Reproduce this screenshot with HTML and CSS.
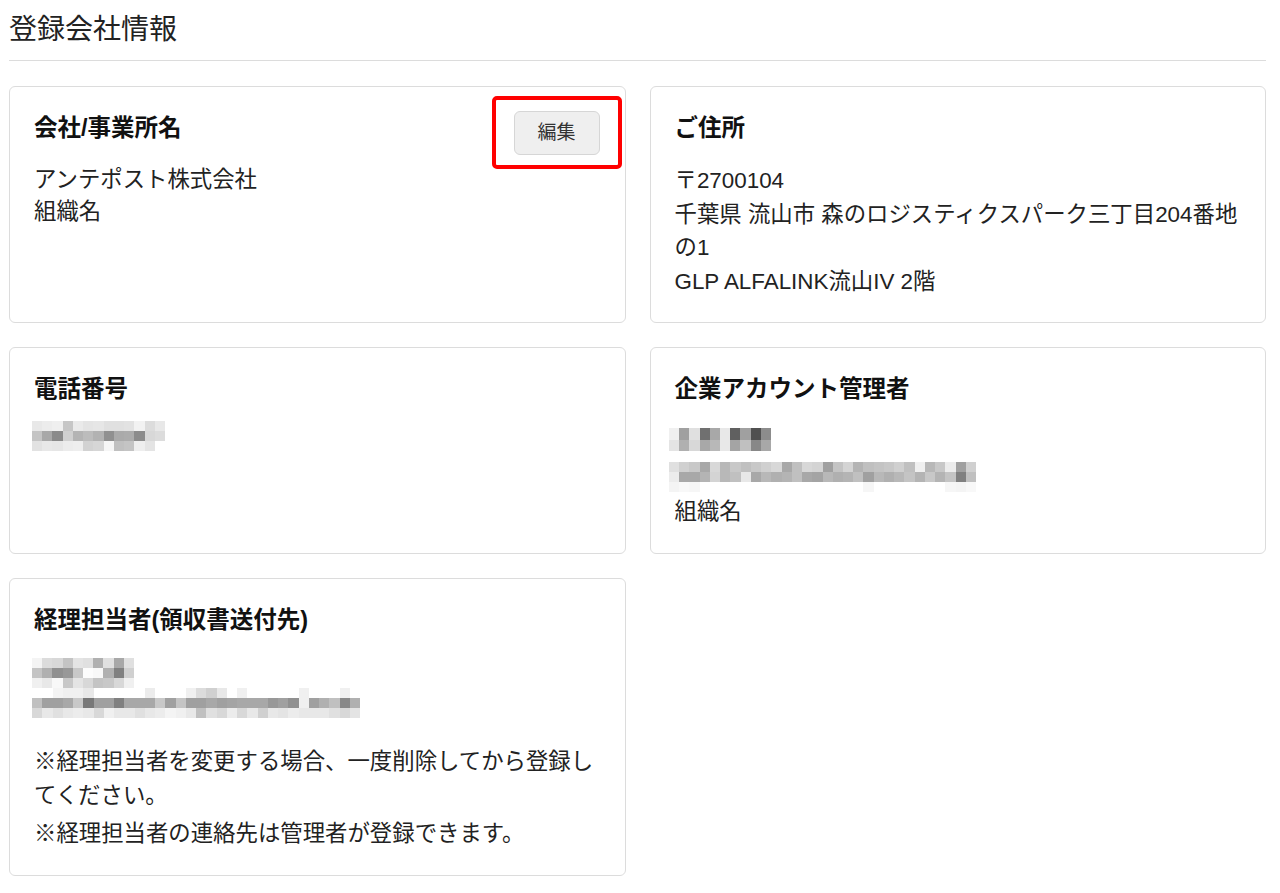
FILE: index.html
```html
<!DOCTYPE html>
<html lang="ja">
<head>
<meta charset="utf-8">
<title>登録会社情報</title>
<link rel="stylesheet" href="styles.css">
</head>
<body>
<div class="page">
  <h1 class="title">登録会社情報</h1>
  <hr class="divider">
  <div class="cards">
    <section class="card">
      <div class="card-head">
        <h2 class="card-title">会社/事業所名</h2>
        <div class="edit-wrap">
          <button class="edit-btn" type="button">編集</button>
          <span class="annot"></span>
        </div>
      </div>
      <div class="card-body">
        <div class="line-32">アンテポスト株式会社</div>
        <div class="line-32">組織名</div>
      </div>
    </section>

    <section class="card">
      <div class="card-head">
        <h2 class="card-title">ご住所</h2>
      </div>
      <div class="card-body">
        <div class="line">〒2700104</div>
        <div class="line">千葉県 流山市 森のロジスティクスパーク三丁目204番地<br>の1</div>
        <div class="line">GLP ALFALINK流山IV 2階</div>
      </div>
    </section>

    <section class="card">
      <div class="card-head">
        <h2 class="card-title">電話番号</h2>
      </div>
      <div class="card-body">
        <svg class="mosaic phone" width="133" height="30" viewBox="0 0 13 3" preserveAspectRatio="none" shape-rendering="crispEdges">
          <g><rect x="0" fill="#e8e8e8"/><rect x="1" fill="#ececec"/><rect x="2" fill="#efefef"/><rect x="3" fill="#c6c6c6"/><rect x="4" fill="#eaeaea"/><rect x="5" fill="#e4e4e4"/><rect x="6" fill="#e6e6e6"/><rect x="7" fill="#e0e0e0"/><rect x="8" fill="#e0e0e0"/><rect x="9" fill="#e2e2e2"/><rect x="10" fill="#f2f2f2"/><rect x="11" fill="#dcdcdc"/><rect x="12" fill="#e8e8e8"/></g>
          <g transform="translate(0 1)"><rect x="0" fill="#c4c4c4"/><rect x="1" fill="#a8a8a8"/><rect x="2" fill="#8a8a8a"/><rect x="3" fill="#d0d0d0"/><rect x="4" fill="#b4b4b4"/><rect x="5" fill="#bcbcbc"/><rect x="6" fill="#b2b2b2"/><rect x="7" fill="#909090"/><rect x="8" fill="#aaaaaa"/><rect x="9" fill="#acacac"/><rect x="10" fill="#8c8c8c"/><rect x="11" fill="#d8d8d8"/><rect x="12" fill="#dcdcdc"/></g>
          <g transform="translate(0 2)"><rect x="0" fill="#e2e2e2"/><rect x="1" fill="#e8e8e8"/><rect x="2" fill="#e6e6e6"/><rect x="3" fill="#ececec"/><rect x="4" fill="#eeeeee"/><rect x="5" fill="#d2d2d2"/><rect x="6" fill="#d6d6d6"/><rect x="7" fill="#f6f6f6"/><rect x="8" fill="#c0c0c0"/><rect x="9" fill="#c4c4c4"/><rect x="10" fill="#eeeeee"/><rect x="11" fill="#e4e4e4"/></g>
        </svg>
      </div>
    </section>

    <section class="card">
      <div class="card-head">
        <h2 class="card-title">企業アカウント管理者</h2>
      </div>
      <div class="card-body">
        <svg class="mosaic mgr-name" width="102" height="23" viewBox="0 0 10 2" preserveAspectRatio="none" shape-rendering="crispEdges">
          <g><rect x="0" fill="#f0f0f0"/><rect x="1" fill="#a0a0a0"/><rect x="2" fill="#e0e0e0"/><rect x="3" fill="#707070"/><rect x="4" fill="#a8a8a8"/><rect x="5" fill="#e8e8e8"/><rect x="6" fill="#606060"/><rect x="7" fill="#a0a0a0"/><rect x="8" fill="#505050"/><rect x="9" fill="#8c8c8c"/></g>
          <g transform="translate(0 1)"><rect x="0" fill="#e4e4e4"/><rect x="1" fill="#b0b0b0"/><rect x="2" fill="#d8d8d8"/><rect x="3" fill="#a8a8a8"/><rect x="4" fill="#b8b8b8"/><rect x="5" fill="#e8e8e8"/><rect x="6" fill="#a4a4a4"/><rect x="7" fill="#c0c0c0"/><rect x="8" fill="#888888"/><rect x="9" fill="#a8a8a8"/></g>
        </svg>
        <svg class="mosaic mgr-mail" width="307" height="30" viewBox="0 0 30 3" preserveAspectRatio="none" shape-rendering="crispEdges">
          <g><rect x="0" fill="#e0e0e0"/><rect x="1" fill="#d0d0d0"/><rect x="2" fill="#c8c8c8"/><rect x="3" fill="#a8a8a8"/><rect x="4" fill="#d8d8d8"/><rect x="5" fill="#b8b8b8"/><rect x="6" fill="#c8c8c8"/><rect x="7" fill="#c0c0c0"/><rect x="8" fill="#c8c8c8"/><rect x="9" fill="#d0d0d0"/><rect x="10" fill="#d8d8d8"/><rect x="11" fill="#a8a8a8"/><rect x="12" fill="#c0c0c0"/><rect x="13" fill="#d8d8d8"/><rect x="14" fill="#d4d4d4"/><rect x="15" fill="#a0a0a0"/><rect x="16" fill="#c4c4c4"/><rect x="17" fill="#d4d4d4"/><rect x="18" fill="#b4b4b4"/><rect x="19" fill="#c0c0c0"/><rect x="20" fill="#c4c4c4"/><rect x="21" fill="#c8c8c8"/><rect x="22" fill="#d0d0d0"/><rect x="23" fill="#c0c0c0"/><rect x="24" fill="#f0f0f0"/><rect x="25" fill="#b8b8b8"/><rect x="26" fill="#c8c8c8"/><rect x="27" fill="#ececec"/><rect x="28" fill="#a0a0a0"/><rect x="29" fill="#d0d0d0"/></g>
          <g transform="translate(0 1)"><rect x="0" fill="#ececec"/><rect x="1" fill="#a8a8a8"/><rect x="2" fill="#a8a8a8"/><rect x="3" fill="#b4b4b4"/><rect x="4" fill="#d4d4d4"/><rect x="5" fill="#b8b8b8"/><rect x="6" fill="#c0c0c0"/><rect x="7" fill="#e8e8e8"/><rect x="8" fill="#a8a8a8"/><rect x="9" fill="#b8b8b8"/><rect x="10" fill="#b0b0b0"/><rect x="11" fill="#b4b4b4"/><rect x="12" fill="#c0c0c0"/><rect x="13" fill="#a8a8a8"/><rect x="14" fill="#a4a4a4"/><rect x="15" fill="#b8b8b8"/><rect x="16" fill="#b0b0b0"/><rect x="17" fill="#b4b4b4"/><rect x="18" fill="#c0c0c0"/><rect x="19" fill="#a0a0a0"/><rect x="20" fill="#b8b8b8"/><rect x="21" fill="#b0b0b0"/><rect x="22" fill="#b8b8b8"/><rect x="23" fill="#c4c4c4"/><rect x="24" fill="#b4b4b4"/><rect x="25" fill="#c8c8c8"/><rect x="26" fill="#b4b4b4"/><rect x="27" fill="#c4c4c4"/><rect x="28" fill="#808080"/><rect x="29" fill="#c0c0c0"/></g>
          <g transform="translate(0 2)"><rect x="0" fill="#f4f4f4"/><rect x="1" fill="#f8f8f8"/><rect x="2" fill="#f6f6f6"/><rect x="19" fill="#f6f6f6"/><rect x="27" fill="#f6f6f6"/><rect x="28" fill="#f4f4f4"/><rect x="29" fill="#f8f8f8"/></g>
        </svg>
        <div class="line org">組織名</div>
      </div>
    </section>

    <section class="card">
      <div class="card-head">
        <h2 class="card-title">経理担当者(領収書送付先)</h2>
      </div>
      <div class="card-body">
        <svg class="mosaic acc-name" width="102" height="30" viewBox="0 0 10 3" preserveAspectRatio="none" shape-rendering="crispEdges">
          <g><rect x="0" fill="#f4f4f4"/><rect x="1" fill="#dcdcdc"/><rect x="2" fill="#d8d8d8"/><rect x="3" fill="#c4c4c4"/><rect x="4" fill="#e4e4e4"/><rect x="5" fill="#e0e0e0"/><rect x="6" fill="#b0b0b0"/><rect x="7" fill="#e0e0e0"/><rect x="8" fill="#a8a8a8"/><rect x="9" fill="#e0e0e0"/></g>
          <g transform="translate(0 1)"><rect x="0" fill="#c4c4c4"/><rect x="1" fill="#b0b0b0"/><rect x="2" fill="#909090"/><rect x="3" fill="#989898"/><rect x="4" fill="#c8c8c8"/><rect x="5" fill="#fcfcfc"/><rect x="6" fill="#f8f8f8"/><rect x="7" fill="#b0b0b0"/><rect x="8" fill="#808080"/><rect x="9" fill="#d0d0d0"/></g>
          <g transform="translate(0 2)"><rect x="0" fill="#f0f0f0"/><rect x="1" fill="#e8e8e8"/><rect x="2" fill="#f8f8f8"/><rect x="3" fill="#c8c8c8"/><rect x="4" fill="#e4e4e4"/><rect x="5" fill="#d8d8d8"/><rect x="6" fill="#c4c4c4"/><rect x="7" fill="#c8c8c8"/><rect x="8" fill="#d8d8d8"/><rect x="9" fill="#f0f0f0"/></g>
        </svg>
        <svg class="mosaic acc-mail" width="328" height="30" viewBox="0 0 32 3" preserveAspectRatio="none" shape-rendering="crispEdges">
          <g><rect x="2" fill="#f4f4f4"/><rect x="3" fill="#f0f0f0"/><rect x="4" fill="#f0f0f0"/><rect x="5" fill="#e8e8e8"/><rect x="11" fill="#ececec"/><rect x="15" fill="#f0f0f0"/><rect x="16" fill="#dcdcdc"/><rect x="17" fill="#d0d0d0"/><rect x="18" fill="#e8e8e8"/><rect x="20" fill="#f0f0f0"/><rect x="26" fill="#f0f0f0"/><rect x="30" fill="#f0f0f0"/></g>
          <g transform="translate(0 1)"><rect x="0" fill="#c0c0c0"/><rect x="1" fill="#a0a0a0"/><rect x="2" fill="#a0a0a0"/><rect x="3" fill="#a8a8a8"/><rect x="4" fill="#c8c8c8"/><rect x="5" fill="#787878"/><rect x="6" fill="#a0a0a0"/><rect x="7" fill="#a0a0a0"/><rect x="8" fill="#808080"/><rect x="9" fill="#a8a8a8"/><rect x="10" fill="#a8a8a8"/><rect x="11" fill="#a8a8a8"/><rect x="12" fill="#c8c8c8"/><rect x="13" fill="#a0a0a0"/><rect x="14" fill="#c4c4c4"/><rect x="15" fill="#a0a0a0"/><rect x="16" fill="#a0a0a0"/><rect x="17" fill="#a8a8a8"/><rect x="18" fill="#a0a0a0"/><rect x="19" fill="#a4a4a4"/><rect x="20" fill="#a8a8a8"/><rect x="21" fill="#a8a8a8"/><rect x="22" fill="#a8a8a8"/><rect x="23" fill="#989898"/><rect x="24" fill="#a0a0a0"/><rect x="25" fill="#909090"/><rect x="26" fill="#f0f0f0"/><rect x="27" fill="#a0a0a0"/><rect x="28" fill="#b0b0b0"/><rect x="29" fill="#c0c0c0"/><rect x="30" fill="#888888"/><rect x="31" fill="#b0b0b0"/></g>
          <g transform="translate(0 2)"><rect x="0" fill="#d8d8d8"/><rect x="1" fill="#e8e8e8"/><rect x="2" fill="#e0e0e0"/><rect x="3" fill="#e8e8e8"/><rect x="4" fill="#ececec"/><rect x="5" fill="#e8e8e8"/><rect x="6" fill="#d8d8d8"/><rect x="7" fill="#f0f0f0"/><rect x="8" fill="#e8e8e8"/><rect x="9" fill="#e8e8e8"/><rect x="10" fill="#e0e0e0"/><rect x="11" fill="#e8e8e8"/><rect x="12" fill="#ececec"/><rect x="13" fill="#f4f4f4"/><rect x="14" fill="#f0f0f0"/><rect x="15" fill="#e8e8e8"/><rect x="16" fill="#c0c0c0"/><rect x="17" fill="#e0e0e0"/><rect x="18" fill="#d8d8d8"/><rect x="19" fill="#ececec"/><rect x="20" fill="#d8d8d8"/><rect x="21" fill="#e8e8e8"/><rect x="22" fill="#d0d0d0"/><rect x="23" fill="#e8e8e8"/><rect x="24" fill="#e4e4e4"/><rect x="25" fill="#ececec"/><rect x="26" fill="#e8e8e8"/><rect x="27" fill="#e8e8e8"/><rect x="28" fill="#e8e8e8"/><rect x="29" fill="#e0e0e0"/><rect x="30" fill="#d8d8d8"/><rect x="31" fill="#e4e4e4"/></g>
        </svg>
        <p class="note first">※経理担当者を変更する場合、一度削除してから登録してください。</p>
        <p class="note">※経理担当者の連絡先は管理者が登録できます。</p>
      </div>
    </section>
  </div>
</div>
</body>
</html>
```

FILE: styles.css
```css
* {
  box-sizing: border-box;
}

html, body {
  margin: 0;
  padding: 0;
  background: #ffffff;
}

body {
  font-family: "Liberation Sans", "Noto Sans CJK JP", sans-serif;
  color: #222222;
  font-size: 22.4px;
}

.page {
  padding: 10px 14px 0 9px;
}

.title {
  margin: 0;
  font-size: 28px;
  font-weight: 400;
  line-height: 40px;
  color: #222222;
}

.divider {
  margin: 10px 0 0 0;
  border: 0;
  border-top: 1px solid #dcdcdc;
  height: 0;
}

.cards {
  margin-top: 25px;
  display: grid;
  grid-template-columns: 1fr 1fr;
  gap: 24px;
  align-items: stretch;
}

.card {
  border: 1px solid #dcdcdc;
  border-radius: 6px;
  padding: 24px 25px 24px 24px;
  display: flex;
  flex-direction: column;
  min-width: 0;
}

.card-head {
  display: flex;
  justify-content: space-between;
  align-items: flex-start;
  height: 34px;
  margin-bottom: 19px;
}

.card-title {
  margin: 0;
  font-size: 23.5px;
  line-height: 34px;
  font-weight: 700;
  color: #111111;
}

.edit-wrap {
  position: relative;
  width: 86px;
  height: 44px;
}

.edit-btn {
  display: block;
  width: 86px;
  height: 44px;
  padding: 0;
  border: 1px solid #d6d6d6;
  border-radius: 6px;
  background: #efefef;
  color: #333333;
  font-family: "Liberation Sans", "Noto Sans CJK JP", sans-serif;
  font-size: 19px;
  line-height: 42px;
}

.annot {
  position: absolute;
  top: -15px;
  left: -22px;
  right: -22px;
  bottom: -14px;
  border: 4px solid #ff0000;
  border-radius: 5px;
  pointer-events: none;
}

.card-body {
  display: flex;
  flex-direction: column;
}

.line-32 {
  line-height: 32px;
}

.line {
  line-height: 33.6px;
}

.mosaic {
  display: block;
  flex: none;
}

.mosaic rect {
  width: 1px;
  height: 1px;
}

.phone {
  margin-top: -4px;
  margin-left: -2px;
}

.mgr-name {
  margin-top: 3px;
  margin-left: -6px;
}

.mgr-mail {
  margin-top: 11px;
  margin-left: -6px;
}

.org {
  margin-top: 3px;
}

.acc-name {
  margin-top: 2px;
  margin-left: -2px;
}

.acc-mail {
  margin-left: -2px;
}

.note {
  margin: 4px 0 0 0;
  line-height: 34px;
}

.note.first {
  margin-top: 27px;
}
```
